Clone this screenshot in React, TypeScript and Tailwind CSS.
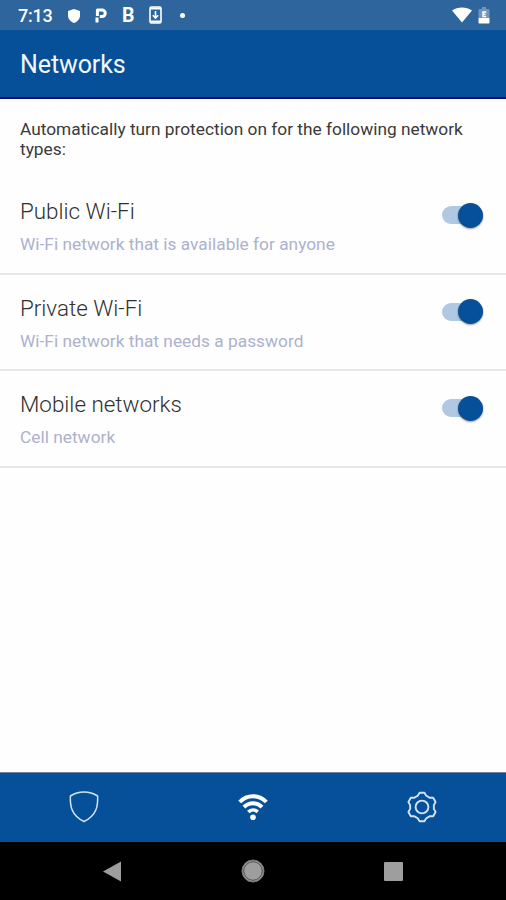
import { useState } from 'react';

interface Network {
  id: string;
  title: string;
  subtitle: string;
}

const NETWORKS: Network[] = [
  { id: 'public', title: 'Public Wi-Fi', subtitle: 'Wi-Fi network that is available for anyone' },
  { id: 'private', title: 'Private Wi-Fi', subtitle: 'Wi-Fi network that needs a password' },
  { id: 'mobile', title: 'Mobile networks', subtitle: 'Cell network' },
];

// One tooth of the gear, repeated every 60 degrees around the centre
const TOOTH = [[-4.3, -11.2], [-2.4, -14.3], [2.4, -14.3], [4.3, -11.2]];
const GEAR_POINTS = [0, 1, 2, 3, 4, 5]
  .flatMap(i => {
    const a = (i * Math.PI) / 3;
    return TOOTH.map(([x, y]) =>
      `${(x * Math.cos(a) - y * Math.sin(a)).toFixed(2)},${(x * Math.sin(a) + y * Math.cos(a)).toFixed(2)}`
    );
  })
  .join(' ');

function StatusBar() {
  return (
    <div className="h-[30px] shrink-0 bg-[#2d659c] text-white flex items-center justify-between pl-[18px] pr-[16px]">
      <div className="flex items-center h-full">
        <span className="w-[50px] text-[18px] leading-[30px] font-medium pt-[2px] tracking-[-0.2px]">7:13</span>
        <svg width="12" height="14" viewBox="0 0 12 14" className="mt-px">
          <path d="M6 0 L12 2 V6.5 C12 10 9.5 12.5 6 14 C2.5 12.5 0 10 0 6.5 V2 Z" fill="white" />
        </svg>
        <svg width="13" height="15" viewBox="0 0 13 15" className="ml-[15px] mt-px">
          <path
            d="M2.4 8 V2 H7 A3.2 3.2 0 0 1 7 8.6 H4.8 M2 9.4 V14.5"
            fill="none"
            stroke="white"
            strokeWidth="3"
            strokeLinejoin="round"
          />
        </svg>
        <span className="ml-[14px] w-[27px] text-[19.5px] leading-[30px] font-bold pt-px">B</span>
        <svg width="13" height="18" viewBox="0 0 13 18">
          <rect x="1" y="1" width="11" height="16" rx="1.5" fill="none" stroke="white" strokeWidth="1.6" />
          <path d="M1 2.6 H12 M1 15.4 H12" stroke="white" strokeWidth="2" />
          <path d="M6.5 5 V12 M3.8 9.3 L6.5 12 L9.2 9.3" fill="none" stroke="white" strokeWidth="1.6" />
        </svg>
        <span className="ml-[18px] size-[5px] rounded-full bg-white" />
      </div>
      <div className="flex items-center">
        <svg width="20" height="16" viewBox="0 0 20 16">
          <path d="M0 3.6 C5.5 -0.6 14.5 -0.6 20 3.6 L10 15.5 Z" fill="white" />
        </svg>
        <svg width="12" height="17" viewBox="0 0 12 17" className="ml-[6px]">
          <path d="M4 0 H8 V2 H10.5 Q11.5 2 11.5 3 V11 H0.5 V3 Q0.5 2 1.5 2 H4 Z" fill="#6f96bd" />
          <path d="M0.5 11 H11.5 V15.5 Q11.5 16.5 10.5 16.5 H1.5 Q0.5 16.5 0.5 15.5 Z" fill="white" />
          <path d="M8.3 5 H5 V9.5 H8.3 M5 7.2 H7.5" fill="none" stroke="white" strokeWidth="1.5" />
        </svg>
      </div>
    </div>
  );
}

function Toggle({ on, label, onToggle }: { on: boolean; label: string; onToggle: () => void }) {
  return (
    <button
      role="switch"
      aria-checked={on}
      aria-label={label}
      onClick={onToggle}
      className={`w-[41px] h-[18px] rounded-full flex items-center ${on ? 'justify-end bg-[#b0c8e1]' : 'justify-start bg-[#c4c4c4]'}`}
    >
      <span
        className={`size-[25px] shrink-0 rounded-full shadow-[0_1px_2px_rgba(0,0,0,0.4)] ${on ? 'bg-[#055098]' : 'bg-white'}`}
      />
    </button>
  );
}

export default function App() {
  const [enabled, setEnabled] = useState<Record<string, boolean>>({
    public: true,
    private: true,
    mobile: true,
  });

  return (
    <div className="w-[506px] h-[900px] flex flex-col bg-[#fefefe] font-['Roboto','Liberation_Sans',sans-serif] overflow-hidden">
      <StatusBar />

      <header className="h-[69px] shrink-0 bg-[#055098] border-b-2 border-[#04087f] flex items-center px-5">
        <h1 className="pt-[2px] text-[25px] leading-8 tracking-[-0.1px] text-[#f3f7fc]">Networks</h1>
      </header>

      <main className="flex-1 flex flex-col">
        <p className="h-[79px] pt-5 pl-5 pr-5 text-[17.3px] leading-5 tracking-[0.01px] text-[#3a3a3a]">
          Automatically turn protection on for the following network types:
        </p>
        {NETWORKS.map(n => (
          <div key={n.id} className="h-[96.5px] shrink-0 flex justify-between pl-5 pr-[23px] border-b-2 border-[#e8e8e8]">
            <div className="pt-[19px]">
              <h2 className="text-[22.4px] leading-7 font-light text-[#303030]">{n.title}</h2>
              <p className="mt-[9px] text-[17.3px] leading-5 tracking-[0.02px] text-[#adb1cd]">{n.subtitle}</p>
            </div>
            <div className="pt-[28px]">
              <Toggle
                on={enabled[n.id]}
                label={n.title}
                onToggle={() => setEnabled(e => ({ ...e, [n.id]: !e[n.id] }))}
              />
            </div>
          </div>
        ))}
      </main>

      {/* App tabs */}
      <nav className="h-[70px] shrink-0 bg-[#055098] border-t border-[#6d86a8] grid grid-cols-3 place-items-center pb-[2px]">
        <svg width="30" height="32" viewBox="0 0 30 32" fill="none" stroke="#d3e2f5" strokeWidth="1.5" strokeLinejoin="round">
          <path d="M15 1 C19.5 1 24.5 2.3 28.6 5 C29 13.5 28.5 24 15 30.5 C1.5 24 1 13.5 1.4 5 C5.5 2.3 10.5 1 15 1 Z" />
        </svg>
        <svg width="30" height="28" viewBox="0 0 30 28" fill="none" stroke="white" strokeWidth="4">
          <path d="M1.7 9 C9 1.2 21 1.2 28.3 9" />
          <path d="M6 14.2 C11 9 19 9 24 14.2" />
          <path d="M10.3 19 C13 16.3 17 16.3 19.7 19" strokeWidth="3.6" />
          <circle cx="15" cy="24.3" r="2.8" fill="white" stroke="none" />
        </svg>
        <svg width="32" height="32" viewBox="-16 -16 32 32" fill="none" stroke="#d3e2f5" strokeWidth="1.9" strokeLinejoin="round">
          <polygon points={GEAR_POINTS} />
          <circle r="6.4" />
        </svg>
      </nav>

      {/* System navigation */}
      <div className="h-[58px] shrink-0 bg-black flex items-center justify-between pl-[103px] pr-[103px]">
        <svg width="19" height="21" viewBox="0 0 19 21">
          <path d="M0 10.5 L18 0.5 V20.5 Z" fill="#9e9e9e" />
        </svg>
        <svg width="24" height="24" viewBox="0 0 24 24">
          <circle cx="12" cy="12" r="11" fill="#9e9e9e" stroke="#777" strokeWidth="1" />
          <circle cx="12" cy="12" r="9.3" fill="none" stroke="#444" strokeWidth="0.9" />
        </svg>
        <span className="size-[19px] rounded-[1px] bg-[#9e9e9e]" />
      </div>
    </div>
  );
}
